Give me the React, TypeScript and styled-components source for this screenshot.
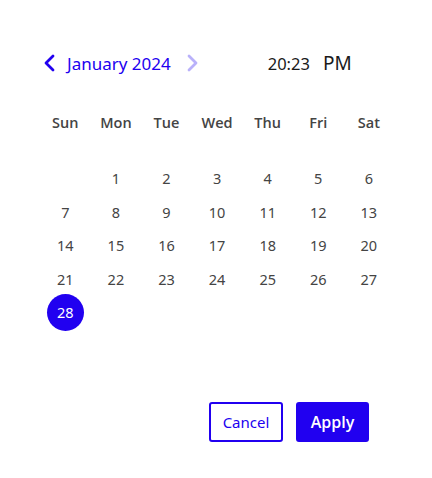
import React from "react";
import styled, { createGlobalStyle } from "styled-components";

const Global = createGlobalStyle`
    body {
        margin: 0;
        background: #ffffff;
        font-family: "Noto Sans", "Open Sans", sans-serif;
    }
`;

const BLUE = "#2100f0";

const Panel = styled.div`
    width: 432px;
    height: 478px;
    box-sizing: border-box;
    padding: 50px 38px 0 40px;
    display: flex;
    flex-direction: column;
`;

const Header = styled.div`
    display: flex;
    align-items: center;
    height: 26px;
`;

const NavButton = styled.button<{ $faded?: boolean }>`
    width: 20px;
    height: 26px;
    padding: 0;
    border: none;
    background: none;
    display: flex;
    align-items: center;
    justify-content: center;
    color: ${(p) => (p.$faded ? "#b9b1fa" : BLUE)};
    cursor: pointer;
`;

const MonthLabel = styled.span`
    color: ${BLUE};
    font-size: 17px;
    margin: 0 11px 0 7px;
`;

const Time = styled.div`
    margin-left: 66px;
    display: flex;
    align-items: baseline;
    color: #1a1a1a;
`;

const Clock = styled.span`
    font-size: 16.5px;
`;

const Meridiem = styled.span`
    font-size: 19px;
    margin-left: 13px;
`;

const Grid = styled.div`
    display: grid;
    grid-template-columns: repeat(7, 50.6px);
    grid-auto-rows: 33.6px;
    margin-top: 18px;
`;

const WeekDay = styled.div`
    display: flex;
    align-items: center;
    justify-content: center;
    font-family: "Open Sans", "Noto Sans", sans-serif;
    font-size: 14.5px;
    font-weight: 600;
    color: #444;
    height: 56px;
    grid-row: 1;
    align-self: start;
`;

const Spacer = styled.div`
    grid-column: 1 / -1;
    height: 15.5px;
`;

const Day = styled.div<{ $selected?: boolean }>`
    display: flex;
    align-items: center;
    justify-content: center;
    font-size: 14.5px;
    color: ${(p) => (p.$selected ? "#ffffff" : "#444")};

    & span {
        width: 37px;
        height: 37px;
        border-radius: 50%;
        display: flex;
        align-items: center;
        justify-content: center;
        background: ${(p) => (p.$selected ? BLUE : "transparent")};
    }
`;

const Actions = styled.div`
    margin-top: auto;
    margin-bottom: 36px;
    display: flex;
    justify-content: flex-end;
    gap: 13px;
    padding-right: 25px;
`;

const ActionButton = styled.button<{ $primary?: boolean }>`
    height: 40px;
    width: ${(p) => (p.$primary ? "73px" : "74px")};
    box-sizing: border-box;
    border-radius: 3px;
    border: 2px solid ${BLUE};
    background: ${(p) => (p.$primary ? BLUE : "#ffffff")};
    color: ${(p) => (p.$primary ? "#ffffff" : BLUE)};
    font-family: ${(p) => (p.$primary ? '"Open Sans", "Noto Sans", sans-serif' : "inherit")};
    font-size: ${(p) => (p.$primary ? "16px" : "15px")};
    font-weight: ${(p) => (p.$primary ? 600 : 400)};
    cursor: pointer;
`;

const Chevron = ({ dir }: { dir: "left" | "right" }) => (
    <svg width="14" height="18" viewBox="0 0 14 18" fill="none">
        <path
            d={dir === "left" ? "M10 2 L3 9 L10 16" : "M4 2 L11 9 L4 16"}
            stroke="currentColor"
            strokeWidth="2.8"
            strokeLinecap="round"
            strokeLinejoin="round"
        />
    </svg>
);

const weekDays = ["Sun", "Mon", "Tue", "Wed", "Thu", "Fri", "Sat"];

const App = () => {
    const days = Array.from({ length: 28 }, (_, i) => i + 1);
    return (
        <>
            <Global />
            <Panel>
                <Header>
                    <NavButton aria-label="Previous month">
                        <Chevron dir="left" />
                    </NavButton>
                    <MonthLabel>January 2024</MonthLabel>
                    <NavButton $faded aria-label="Next month">
                        <Chevron dir="right" />
                    </NavButton>
                    <Time>
                        <Clock>20:23</Clock>
                        <Meridiem>PM</Meridiem>
                    </Time>
                </Header>
                <Grid>
                    {weekDays.map((d) => (
                        <WeekDay key={d}>{d}</WeekDay>
                    ))}
                    <Spacer />
                    <div />
                    {days.map((d) => (
                        <Day key={d} $selected={d === 28}>
                            <span>{d}</span>
                        </Day>
                    ))}
                </Grid>
                <Actions>
                    <ActionButton>Cancel</ActionButton>
                    <ActionButton $primary>Apply</ActionButton>
                </Actions>
            </Panel>
        </>
    );
};

export default App;
